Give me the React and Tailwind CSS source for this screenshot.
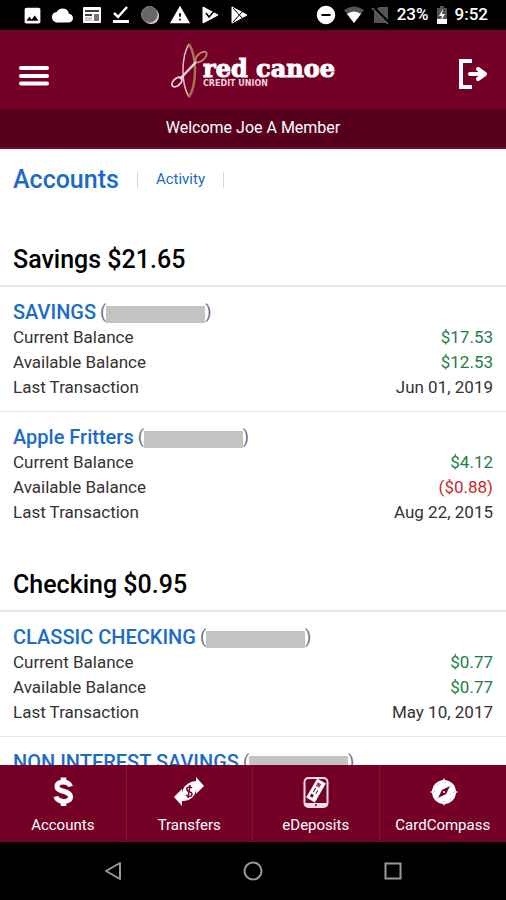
import { MdImage, MdCloud, MdWarning, MdRemoveCircle } from 'react-icons/md'

const groups = [
  {
    title: 'Savings $21.65',
    accounts: [
      { name: 'SAVINGS', current: '$17.53', available: '$12.53', last: 'Jun 01, 2019' },
      { name: 'Apple Fritters', current: '$4.12', available: '($0.88)', last: 'Aug 22, 2015' },
    ],
  },
  {
    title: 'Checking $0.95',
    accounts: [
      { name: 'CLASSIC CHECKING', current: '$0.77', available: '$0.77', last: 'May 10, 2017' },
      { name: 'NON INTEREST SAVINGS' },
    ],
  },
]

function StatusBar() {
  return (
    <div className="flex h-[30px] shrink-0 items-center justify-between bg-black pl-[22px] pr-[18px] text-white">
      <div className="flex items-center gap-[9px]">
        <MdImage size={21} />
        <MdCloud size={21} />
        {/* news */}
        <svg width="20" height="20" viewBox="0 0 20 20">
          <rect x="1" y="2" width="18" height="16" rx="1" fill="white" />
          <path d="M3 6h14M3 10h7" stroke="black" fill="none" strokeWidth="1.500" />
          <rect x="3" y="12" width="7" height="4" fill="#ccc" />
          <rect x="12" y="9" width="5" height="7" fill="#777" />
        </svg>
        {/* download done */}
        <svg width="20" height="20" viewBox="0 0 20 20">
          <path d="M3 8l4 4 9-10" stroke="white" strokeWidth="2.500" fill="none" />
          <rect x="2" y="15" width="16" height="3" fill="white" />
        </svg>
        <svg width="20" height="20" viewBox="0 0 20 20">
          <circle cx="11" cy="11" r="8" fill="#ddd" />
          <circle cx="9.500" cy="9.500" r="8" fill="#666" stroke="#888" />
        </svg>
        <MdWarning size={22} />
        {/* play store with check */}
        <svg width="20" height="20" viewBox="0 0 20 20">
          <path d="M3 2l15 8-15 8z" fill="white" stroke="white" strokeLinejoin="round" />
          <path d="M6 8l3 4 7-8" stroke="black" strokeWidth="1.500" fill="none" />
        </svg>
        <svg width="20" height="20" viewBox="0 0 20 20">
          <path d="M3 2l15 8-15 8z" fill="white" stroke="white" strokeLinejoin="round" />
          <path d="M4 3l9 10M4 17l9-10" stroke="black" fill="none" />
        </svg>
      </div>
      <div className="flex items-center gap-[6px] text-[17px] font-medium">
        <MdRemoveCircle size={22} />
        <svg width="22" height="20" viewBox="0 0 22 20">
          <path d="M1 5q10-7 20 0L11 18z" fill="#555" />
          <path d="M4 9q7-5 14 0l-7 9z" fill="white" />
        </svg>
        <svg width="20" height="20" viewBox="0 0 20 20">
          <path d="M8 2h9v16H3V7z" fill="#555" />
          <path d="M2 2l16 16" stroke="black" strokeWidth="3" />
          <path d="M1 3l16 16" stroke="#666" strokeWidth="1.500" />
        </svg>
        <span>23%</span>
        <svg width="14" height="20" viewBox="0 0 14 20">
          <path d="M5 1h4v2h3v16H2V3h3z" fill="#555" />
          <rect x="2" y="14" width="10" height="5" fill="white" />
          <path d="M8 4L4 11h3l-1 5 4-7H7z" fill="white" />
        </svg>
        <span>9:52</span>
      </div>
    </div>
  )
}

function Logo() {
  return (
    <svg width="168" height="56" viewBox="0 0 168 56" role="img" aria-label="red canoe credit union">
      {/* canoe */}
      <path d="M20 2C12 15 12 42 20 55" stroke="#e3bcc4" strokeWidth="1.500" fill="none" />
      <path d="M20 2C28 15 28 42 20 55" stroke="#a5744f" strokeWidth="2.500" fill="none" />
      {/* paddle */}
      <ellipse cx="32" cy="15" rx="7" ry="3.500" transform="rotate(-42 32 15)" stroke="#b98f68" strokeWidth="1.800" fill="none" />
      <path d="M27 20L11 37" stroke="#f0d0d8" strokeWidth="2.500" />
      <ellipse cx="8" cy="40" rx="6" ry="3.500" transform="rotate(-42 8 40)" stroke="#f5dfe3" strokeWidth="1.800" fill="none" />
      <text x="34" y="35" fontSize="24" fontWeight="700" fontFamily="DejaVu Serif, serif" fill="white" stroke="white" strokeWidth="1">red canoe</text>
      <text x="34" y="44" fontSize="8" fontWeight="700" fontFamily="DejaVu Sans, sans-serif" fill="#f0d5da">CREDIT UNION</text>
    </svg>
  )
}

function Account({ account }) {
  return (
    <li className="border-b border-gray-200 px-[13px] pt-3 pb-[11px] last:border-transparent">
      <h3 className="flex items-center text-xl leading-[26px]">
        <a href="#" className="font-medium text-[#1a6cc8]">{account.name}</a>
        <span className="ml-1 flex items-center text-lg leading-[26px] text-gray-500">
          (<span className="mt-1 h-[17px] w-[99px] bg-[#c3c3c3]" />)
        </span>
      </h3>
      {account.current && (
        <dl className="text-[17px] leading-[25px] text-[#333]">
          <div className="flex justify-between">
            <dt>Current Balance</dt>
            <dd className="text-[#1c8048]">{account.current}</dd>
          </div>
          <div className="flex justify-between">
            <dt>Available Balance</dt>
            <dd className={account.available.startsWith('(') ? 'text-[#c62a30]' : 'text-[#1c8048]'}>
              {account.available}
            </dd>
          </div>
          <div className="flex justify-between">
            <dt>Last Transaction</dt>
            <dd>{account.last}</dd>
          </div>
        </dl>
      )}
    </li>
  )
}

function DollarIcon() {
  return (
    <svg width="32" height="32" viewBox="0 0 32 32" fill="none" stroke="white">
      <path d="M23.500 10.500C22 4.500 10 4.500 10 10.500C10 16.500 23.500 14 23.500 21C23.500 27 10 27 9 20.500" strokeWidth="5" />
      <path d="M16.500 1.500v5M16.500 25v5" strokeWidth="5.500" />
    </svg>
  )
}

function TransferIcon() {
  return (
    <svg width="32" height="32" viewBox="0 0 32 32">
      <path d="M23 1l8 9-8 8v-4C22 20 18 25 9 25v5L1 21l8-8v4C10 11 14 6 23 5z" fill="white" />
      <path d="M19 12c-2-2-6-1-5 2s5 1 5 4-4 3-6 1M17 9l-2 13" stroke="#750027" strokeWidth="1.500" fill="none" />
    </svg>
  )
}

function DepositIcon() {
  return (
    <svg width="32" height="32" viewBox="0 0 32 32">
      <rect x="4.500" y="2" width="23" height="29" rx="4" fill="none" stroke="#f1dde2" strokeWidth="2" />
      <path d="M5 27h22v1q-1 3-4 3H9q-3 0-4-3z" fill="#f1dde2" />
      <circle cx="16" cy="29" r="1" fill="#750027" />
      {/* check */}
      <g transform="rotate(-60 16 14.500)">
        <rect x="5" y="9.500" width="22" height="10" fill="white" />
        <rect x="8" y="12" width="3" height="3" fill="#750027" />
        <path d="M13 13h5M13 16h4" stroke="#750027" />
        <rect x="20" y="12" width="4" height="4" fill="#9c4a63" />
      </g>
    </svg>
  )
}

function CompassIcon() {
  return (
    <svg width="32" height="32" viewBox="0 0 32 32">
      <circle cx="17" cy="16" r="12" fill="white" />
      <path d="M17 2l2 4h-4zM17 30l2-4h-4zM3 16l4-2v4zM31 16l-4-2v4z" fill="white" />
      <circle cx="17" cy="16" r="9.500" fill="none" stroke="#b77a8d" strokeDasharray="1 6.460" />
      <path d="M23 10l-4 8-8 4 4-8z" fill="#750027" />
      <circle cx="17" cy="16" r="1" fill="white" />
    </svg>
  )
}

const navItems = [
  { label: 'Accounts', icon: DollarIcon },
  { label: 'Transfers', icon: TransferIcon },
  { label: 'eDeposits', icon: DepositIcon },
  { label: 'CardCompass', icon: CompassIcon },
]

export default function App() {
  return (
    <div className="flex h-screen flex-col overflow-hidden bg-white font-['Roboto',sans-serif]">
      <StatusBar />

      <header className="shrink-0 bg-[#750027] text-white">
        <div className="flex h-[79px] items-center justify-between px-[18px]">
          <button aria-label="Menu" className="pt-3">
            <svg width="32" height="24" viewBox="0 0 32 24" stroke="white" strokeWidth="4" strokeLinecap="round">
              <path d="M3 4h26M3 12h26M3 19.500h26" />
            </svg>
          </button>
          <Logo />
          <button aria-label="Log out" className="pt-2">
            <svg width="32" height="32" viewBox="0 0 32 32" fill="none" stroke="white" strokeWidth="4">
              <path d="M16 3H5v26h11" />
              <path d="M14 16h14M22 11l7 5-7 5" strokeLinecap="round" strokeLinejoin="round" />
            </svg>
          </button>
        </div>
        <p className="h-10 border-b-2 border-[#750a25] bg-[#56001d] text-center text-base leading-[38px]">
          Welcome Joe A Member
        </p>
      </header>

      <main className="min-h-0 flex-1 overflow-hidden">
        <nav className="flex h-[63px] items-center pb-[2px] pl-[13px] text-[#1a6cc8]">
          <a href="#" className="text-[25px] leading-8 font-medium">Accounts</a>
          <span className="mx-[18px] h-4 w-px bg-gray-300" />
          <a href="#" className="text-[15px]">Activity</a>
          <span className="mx-[18px] h-4 w-px bg-gray-300" />
        </nav>
        {groups.map((group) => (
          <section key={group.title}>
            <h2 className="border-b-2 border-gray-200 px-[13px] pt-8 pb-[9px] text-[25px] leading-8 font-medium text-black">
              {group.title}
            </h2>
            <ul>
              {group.accounts.map((account) => (
                <Account key={account.name} account={account} />
              ))}
            </ul>
          </section>
        ))}
      </main>

      <nav className="grid h-[77px] shrink-0 grid-cols-4 bg-[#750027] text-white">
        {navItems.map(({ label, icon: Icon }) => (
          <a key={label} href="#" className="flex flex-col items-center border-r border-[#84123a] pt-[11px] text-[15px] last:border-r-0">
            <Icon />
            <span className="mt-[6px]">{label}</span>
          </a>
        ))}
      </nav>

      <div className="flex h-[58px] shrink-0 items-center justify-center gap-[120px] bg-black">
        <button aria-label="Back">
          <svg width="20" height="20" viewBox="0 0 20 20" fill="none" stroke="#999" strokeWidth="2">
            <path d="M17 2v16L3 10z" strokeLinejoin="round" />
          </svg>
        </button>
        <button aria-label="Home">
          <svg width="20" height="20" viewBox="0 0 20 20" fill="none" stroke="#999" strokeWidth="2">
            <circle cx="10" cy="10" r="8.500" />
          </svg>
        </button>
        <button aria-label="Recent apps">
          <svg width="20" height="20" viewBox="0 0 20 20" fill="none" stroke="#999" strokeWidth="2">
            <rect x="2.500" y="2.500" width="15" height="15" />
          </svg>
        </button>
      </div>
    </div>
  )
}
